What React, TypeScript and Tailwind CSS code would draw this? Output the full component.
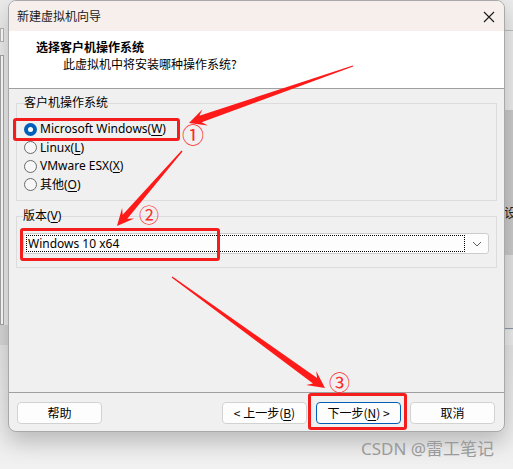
import React from "react";

type P = [number, number];

function arrowPoints(tail: P, tip: P, headLen: number, headW: number, neckW: number): string {
  const dx = tip[0] - tail[0];
  const dy = tip[1] - tail[1];
  const len = Math.hypot(dx, dy);
  const ux = dx / len;
  const uy = dy / len;
  const nx = -uy;
  const ny = ux;
  const base: P = [tip[0] - ux * headLen, tip[1] - uy * headLen];
  const neck: P = [tip[0] - ux * headLen * 0.72, tip[1] - uy * headLen * 0.72];
  const pts: P[] = [
    [tail[0] + nx * 0.6, tail[1] + ny * 0.6],
    [neck[0] + (nx * neckW) / 2, neck[1] + (ny * neckW) / 2],
    [base[0] + (nx * headW) / 2, base[1] + (ny * headW) / 2],
    tip,
    [base[0] - (nx * headW) / 2, base[1] - (ny * headW) / 2],
    [neck[0] - (nx * neckW) / 2, neck[1] - (ny * neckW) / 2],
    [tail[0] - nx * 0.6, tail[1] - ny * 0.6],
  ];
  return pts.map((p) => `${p[0].toFixed(1)},${p[1].toFixed(1)}`).join(" ");
}

function U({ children }: { children: React.ReactNode }) {
  return <span className="underline underline-offset-2 decoration-1">{children}</span>;
}

function Radio({ checked, children }: { checked?: boolean; children: React.ReactNode }) {
  return (
    <div className="flex items-center h-[18.5px] gap-[3px]">
      {checked ? (
        <span className="w-[13px] h-[13px] rounded-full bg-[#005fb8] flex items-center justify-center">
          <span className="w-[5px] h-[5px] rounded-full bg-white" />
        </span>
      ) : (
        <span className="w-[13px] h-[13px] rounded-full border border-[#6a6a6a] bg-[#f7f7f7]" />
      )}
      <span className="text-[12px] leading-[16px] text-black">{children}</span>
    </div>
  );
}

function Btn({ children, primary }: { children: React.ReactNode; primary?: boolean }) {
  return (
    <div
      className={
        "w-[85px] h-[22px] rounded-[4px] bg-[#fdfdfd] flex items-center justify-center text-[12px] leading-[16px] text-black " +
        (primary ? "border border-[#005fb8]" : "border border-[#d2d2d2]")
      }
    >
      {children}
    </div>
  );
}

export default function App() {
  return (
    <div className="relative w-[513px] h-[469px] overflow-hidden bg-[#ebebeb] font-['Noto_Sans','Noto_Sans_CJK_SC',sans-serif]">
      {/* background application (behind the dialog) */}
      <div className="absolute left-0 top-[28px] w-[4px] h-[14px] bg-white border border-[#b5b5b5]" />
      <div className="absolute left-0 top-[55px] w-[4px] h-[270px] bg-white border border-[#a5a5a5]" />
      <div className="absolute left-0 top-[325px] w-[8px] h-[22px] bg-[#d6d6d6]" />
      <div className="absolute left-[505px] top-[30px] w-[8px] h-px bg-[#bdbdbd]" />
      <div className="absolute left-[505px] top-[110px] w-[8px] h-[145px] bg-[#c9c9c9]" />
      <div className="absolute left-[504px] top-[203px] text-[13px] leading-[18px] text-[#222] font-['Noto_Sans_CJK_SC',sans-serif]">设</div>
      <div className="absolute left-[505px] top-[255px] w-[8px] h-[75px] bg-[#e2e2e2]" />
      <div className="absolute left-[505px] top-[328px] w-[8px] h-px bg-[#8c9aa6]" />
      <div className="absolute left-0 top-[345px] w-[513px] h-[124px] bg-gradient-to-b from-[#e4e4e4] to-[#f1f1f1]" />

      {/* dialog */}
      <div className="absolute left-[8px] top-0 w-[497px] h-[432px] flex flex-col border border-[#a9a9a9] rounded-[8px] overflow-hidden bg-[#f0f0f0] shadow-[0_10px_22px_rgba(0,0,0,0.22)]">
        <div className="h-[30px] shrink-0 bg-[#f6efec] flex items-center justify-between pl-[8px] pr-[9px]">
          <span className="text-[12px] leading-[16px] text-[#1a1a1a] font-['Noto_Sans_CJK_SC',sans-serif]">新建虚拟机向导</span>
          <svg width="12" height="12" viewBox="0 0 12 12" className="mt-px">
            <path d="M1 1 L11 11 M11 1 L1 11" stroke="#1a1a1a" strokeWidth="1.1" />
          </svg>
        </div>
        <div className="h-[58px] shrink-0 bg-white border-b border-[#a0a0a0] pl-[27px] pt-[8px] font-['Noto_Sans_CJK_SC',sans-serif]">
          <div className="text-[12px] leading-[16px] font-bold text-black">选择客户机操作系统</div>
          <div className="text-[12px] leading-[16px] text-black mt-px pl-[27px]">此虚拟机中将安装哪种操作系统?</div>
        </div>
        <div className="flex-1 flex flex-col px-[7px]">
          <fieldset className="mt-[7px] border border-[#dcdcdc] pl-[7px] pt-[10px] pb-[6px]">
            <legend className="text-[12px] leading-[14px] text-black px-0">客户机操作系统</legend>
            <Radio checked>
              Microsoft Windows(<U>W</U>)
            </Radio>
            <Radio>
              Linux(<U>L</U>)
            </Radio>
            <Radio>
              VMware ESX(<U>X</U>)
            </Radio>
            <Radio>
              其他(<U>O</U>)
            </Radio>
          </fieldset>
          <fieldset className="mt-[8px] border border-[#dcdcdc] pl-[6px] pr-[7px] pt-[10px] pb-[13px]">
            <legend className="text-[12px] leading-[14px] text-black px-0">
              版本(<U>V</U>)
            </legend>
            <div className="h-[21px] bg-[#fdfdfd] border border-[#cdcdcd] rounded-[3px] flex items-center pl-[2px] pr-[6px]">
              <div className="flex-1 h-[17px] border border-dotted border-black flex items-center pl-[1px] text-[12px] leading-[16px] text-black">
                Windows 10 x64
              </div>
              <svg width="10" height="6" viewBox="0 0 10 6" className="ml-[7px]">
                <path d="M1 1 L5 5 L9 1" fill="none" stroke="#606060" strokeWidth="1" />
              </svg>
            </div>
          </fieldset>
        </div>
        <div className="h-[39px] shrink-0 border-t border-[#a0a0a0] flex justify-between items-start pt-[9px] pl-[8px] pr-[9px] font-['Noto_Sans_CJK_SC',sans-serif]">
          <Btn>帮助</Btn>
          <div className="flex gap-[9px]">
            <Btn>
              &lt; 上一步(<U>B</U>)
            </Btn>
            <Btn primary>
              下一步(<U>N</U>) &gt;
            </Btn>
            <Btn>取消</Btn>
          </div>
        </div>
      </div>

      {/* watermark */}
      <div className="absolute left-[361px] top-[438px] text-[17px] leading-[22px] text-[#9a9a9a] font-['Noto_Sans','Noto_Sans_CJK_SC',sans-serif]">
        CSDN @雷工笔记
      </div>

      {/* annotations */}
      <div className="absolute left-[13px] top-[118px] w-[167px] h-[23px] border-[3px] border-[#f41d1d] rounded-[3px]" />
      <div className="absolute left-[20px] top-[228px] w-[200px] h-[33px] border-[3px] border-[#f41d1d] rounded-[3px]" />
      <div className="absolute left-[308px] top-[393px] w-[99px] h-[37px] border-[3px] border-[#f41d1d] rounded-[3px]" />
      <svg className="absolute left-0 top-0 pointer-events-none" width="513" height="469">
        <polygon points={arrowPoints([353, 66], [189, 123], 17, 17, 7)} fill="#ff1a1a" />
        <polygon points={arrowPoints([182, 151], [117, 226], 17, 16, 6)} fill="#ff1a1a" />
        <polygon points={arrowPoints([172, 277], [325, 388], 17, 17, 7)} fill="#ff1a1a" />
      </svg>
      <span className="absolute left-[182px] top-[120px] text-[22px] leading-[26px] text-[#ff2a2a] font-['Noto_Sans_CJK_SC',sans-serif]">①</span>
      <span className="absolute left-[139px] top-[203px] text-[20px] leading-[24px] text-[#ff2a2a] font-['Noto_Sans_CJK_SC',sans-serif]">②</span>
      <span className="absolute left-[329px] top-[369px] text-[21px] leading-[25px] text-[#ff2a2a] font-['Noto_Sans_CJK_SC',sans-serif]">③</span>
    </div>
  );
}
